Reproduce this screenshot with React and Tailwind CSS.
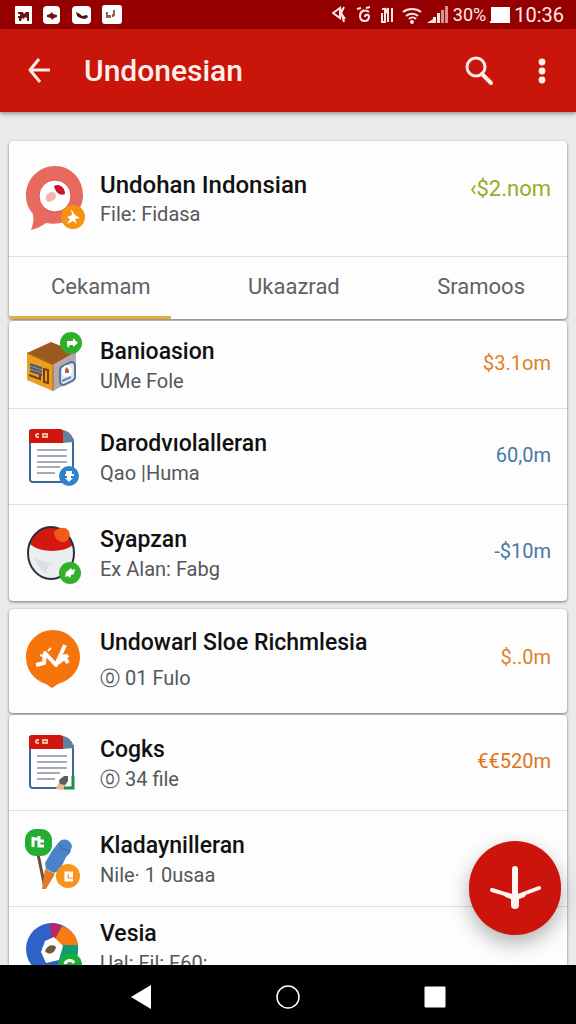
import { useState } from 'react'

function ChatIcon() {
  return (
    <svg viewBox="0 0 60 64" className="h-16 w-[60px] overflow-visible">
      <path d="M30 -1C14 -1 1 12 1 28c0 9 3 14 7 19 1 6 0 11-2 16 7-2 11-4 15-7 20 4 37-9 37-28C58 12 46-1 30-1z" fill="#e8695d" />
      <circle cx="30" cy="29" r="16" fill="#fff" stroke="#d9564c" />
      <path d="M29 19c5-3 11 1 11 8-4 2-9 0-11-8z" fill="#c9142a" />
      <path d="M21 29c2-4 7-5 9-3 3 4-1 9-7 9-2-1-3-4-2-6z" fill="#f3b6b3" />
      <circle cx="48" cy="50" r="12" fill="#f6920f" />
      <path d="M46 42l4 6 5 3-5 1 2 5-4-3-6 3 3-5-3-2 5-2z" fill="#fff" />
    </svg>
  )
}

function BoxIcon() {
  return (
    <svg viewBox="0 0 60 64" className="h-16 w-[60px] overflow-visible">
      <path d="M2 20L26 9l25 10-23 13z" fill="#9c5a1e" />
      <path d="M2 20l26 12v26L2 47z" fill="#e9a01c" />
      <path d="M28 32l23-13v27L28 58z" fill="#b3a8b0" />
      <path d="M2 20l26 12v26" fill="none" stroke="#a8681b" />
      <path d="M5 30l12 4v9L5 39z" fill="#565a6b" />
      <path d="M5 33l12 4M5 36l12 4" stroke="#8f95a3" />
      <path d="M19 36l4 1v13l-4-1zM4 42l11 4v-4" fill="none" stroke="#7a3c12" strokeWidth="2" />
      <path d="M36 34l10-5c3 0 4 2 4 4v11c0 2-1 3-3 4l-8 4c-3 0-4-1-4-4V37z" fill="#dfe6f0" stroke="#5b7397" strokeWidth="2" />
      <ellipse cx="42" cy="38" rx="5" ry="6" fill="#fff" />
      <path d="M40 40v-4l2-2 2 3v3z" fill="#b3684c" />
      <path d="M37 48l9-4" stroke="#5b86c4" strokeWidth="2" />
      <circle cx="46" cy="10" r="11" fill="#2fae2c" />
      <path d="M42 8h6V5l5 5-5 4v-2h-3l-2 3-1-3z" fill="#fff" />
    </svg>
  )
}

function DocumentIcon({ signed }) {
  return (
    <svg viewBox="0 0 60 64" className="h-16 w-[60px]">
      <path d="M5 6h32l11 9v39c0 2-1 3-3 3H8c-2 0-3-1-3-3z" fill="#fff" stroke="#3a6a9c" strokeWidth="2" />
      <path d="M37 5c6 0 11 5 12 12l-12 1z" fill="#64809f" />
      <path d="M7 4h28c2 0 3 1 3 3v11H4V7c0-2 1-3 3-3z" fill="#d0170f" />
      <path d="M11 9h3M11 12h3M11 9v3M18 9h4v3h-4z" fill="none" stroke="#ffb59c" strokeWidth="2" />
      <path d="M12 25h30M12 31h30M12 37h30M12 42h23M12 48h18" stroke="#a5abb4" strokeWidth="2" />
      {signed ? (
        <>
          <path d="M31 58c2-6 4-9 8-10l3 4-4 7z" fill="#e8bd92" />
          <path d="M34 49l5-4h4v5l-3 4-5-1z" fill="#5a5d60" />
          <path d="M39 57h9V45" fill="none" stroke="#1e8f4a" strokeWidth="3" />
        </>
      ) : (
        <>
          <circle cx="44" cy="51" r="10" fill="#2f82cb" />
          <path d="M41 46h6v3h2v2h-3v2h2l-4 4-4-4h2v-2h-2v-2h1z" fill="#fff" />
        </>
      )}
    </svg>
  )
}

function BallIcon() {
  return (
    <svg viewBox="0 0 60 64" className="h-16 w-[60px]">
      <ellipse cx="26" cy="32" rx="23" ry="26" fill="#eceff2" />
      <path d="M5 23C8 11 16 6 26 6s19 6 22 18c-9 8-34 8-43-1z" fill="#d3190f" />
      <path d="M10 36c2 10 7 15 13 17-2-5 0-10 7-11-8 0-15-2-20-6z" fill="#dbe0e5" />
      <ellipse cx="26" cy="32" rx="23" ry="26" fill="none" stroke="#2a2f3a" strokeWidth="2" />
      <path d="M29 11c3-4 10-6 14-2 3 4 2 9-3 12-6 1-11-4-11-10z" fill="#f25a1c" />
      <circle cx="45" cy="52" r="11" fill="#33b02d" />
      <path d="M41 51l3-2 2-2 1 2 3-1-1 5-3 1-1 3-2-2-3 1z" fill="#fff" />
    </svg>
  )
}

function PinIcon() {
  return (
    <svg viewBox="0 0 60 64" className="h-16 w-[60px]">
      <path d="M28 1C13 1 1 13 1 28c0 13 8 23 20 27l6 4 6-4c13-4 22-14 22-27C55 13 43 1 28 1z" fill="#f5740c" />
      <path d="M11 36l8-2 1-10 11 12 9-20M38 26l5 8M33 34l10-8" fill="none" stroke="#fff" strokeWidth="4" strokeLinejoin="round" />
      <path d="M15 26l6 2M23 22l3-3" stroke="#fff" strokeWidth="2" />
    </svg>
  )
}

function ToolsIcon() {
  return (
    <svg viewBox="0 0 60 64" className="h-16 w-[60px]">
      <path d="M13 27l7 34" stroke="#6d4a40" strokeWidth="3" />
      <path d="M34 15c4-5 12-2 13 4l-2 7-4 4-6 13-6 3-8-4-1-6 7-12z" fill="#4a83c8" />
      <path d="M34 17c2 4 6 6 11 7" fill="none" stroke="#2f62a5" />
      <path d="M20 42l10 5-9 15h-4z" fill="#e37b24" />
      <rect x="0" y="2" width="27" height="27" rx="11" fill="#23ad32" />
      <path d="M8 10v10M8 12h5M14 9v10h5M15 14h4" fill="none" stroke="#fff" strokeWidth="3" />
      <circle cx="43" cy="49" r="12" fill="#f7941d" />
      <path d="M48 46h-7v7h7M44 49h4" fill="none" stroke="#fff" strokeWidth="3" />
    </svg>
  )
}

function WheelIcon() {
  return (
    <svg viewBox="0 0 60 64" className="h-16 w-[60px]">
      <circle cx="27" cy="34" r="26" fill="#2e62c6" />
      <path d="M25 8c4 0 8 1 12 3L27 34z" fill="#b62a63" />
      <path d="M27 30l10-19c10 4 15 10 16 19z" fill="#fa7b12" />
      <path d="M27 30h26c0 10-1 15-6 21z" fill="#109a76" />
      <path d="M29 22l9 9-4 14-13 3-5-11 4-11z" fill="#fff" />
      <path d="M20 36c2-6 8-7 11-4-1 6-7 9-11 4z" fill="#6e5a3c" />
      <circle cx="45" cy="50" r="12" fill="#1cac38" />
      <path d="M40 49c1-4 7-5 9-1" fill="none" stroke="#fff" strokeWidth="3" />
    </svg>
  )
}

const groups = [
  {
    id: 'files',
    className: 'mt-0.5',
    items: [
      { title: 'Banioasion', sub: 'UMe Fole', price: '$3.1om', color: 'text-[#dd8127]', height: 'h-[88px]', icon: <BoxIcon /> },
      { title: 'Darodvıolalleran', sub: 'Qao |Huma', price: '60,0m', color: 'text-[#4679a4]', height: 'h-24', icon: <DocumentIcon /> },
      { title: 'Syapzan', sub: 'Ex Alan: Fabg', price: '-$10m', color: 'text-[#4679a4]', height: 'h-24', icon: <BallIcon /> }
    ]
  },
  {
    id: 'single',
    className: 'mt-2',
    items: [
      { title: 'Undowarl Sloe Richmlesia', sub: '⓪ 01 Fulo', price: '$..0m', color: 'text-[#dd8127]', height: 'h-[104px]', loose: true, icon: <PinIcon /> }
    ]
  },
  {
    id: 'more',
    className: 'mt-0.5',
    items: [
      { title: 'Cogks', sub: '⓪ 34 file', price: '€€520m', color: 'text-[#dd7518]', height: 'h-24', icon: <DocumentIcon signed /> },
      { title: 'Kladaynilleran', sub: 'Nile· 1 0usaa', height: 'h-24', icon: <ToolsIcon /> },
      { title: 'Vesia', sub: 'Ual: Fil: F60:', height: 'h-20', icon: <WheelIcon /> }
    ]
  }
]

const tabs = ['Cekamam', 'Ukaazrad', 'Sramoos']

function Row({ item }) {
  return (
    <li className={`flex items-center gap-[15px] px-4 ${item.height}`}>
      <span className="shrink-0">{item.icon}</span>
      <div className={`min-w-0 flex-1 ${item.loose ? 'pb-0.5' : 'pt-0.5'}`}>
        <h2 className="truncate text-[23px] leading-[30px] font-medium text-[#111]">{item.title}</h2>
        <p className={`truncate text-xl leading-7 text-[#55575a] ${item.loose ? 'mt-1.5' : ''}`}>{item.sub}</p>
      </div>
      {item.price && (
        <span className={`text-xl leading-7 ${item.loose ? 'pb-2' : 'pb-1'} ${item.color}`}>{item.price}</span>
      )}
    </li>
  )
}

function StatusBar() {
  return (
    <div className="flex h-[29px] shrink-0 items-center justify-between bg-[#940000] pr-3 pl-[15px] text-[#ffecec]">
      <svg viewBox="0 0 108 20" className="h-5 w-[108px]" fill="#fff">
        <rect x="0" y="1" width="17" height="18" rx="1" />
        <rect x="28" y="1" width="17" height="18" rx="4" />
        <rect x="57" y="1" width="19" height="18" rx="4" />
        <rect x="87" y="0" width="20" height="19" rx="3" />
        <path d="M3 7h5l1 2 2-2h3v9h-2v-3l-2-1-1 2-2-1-1 3H4v-3H3v-2h2V9H3zM32 10l3-1 2-2 1 2 4 1v2l-3 1-2 2-1-2-4-1z" fill="#6b1414" />
        <path d="M61 7l4 2 2 2 5-1 1 2-3 2-5-1-3-2z" fill="#4b1111" />
        <path d="M91 7h2v3h3v3h-5zM97 9h2v3h-2zM98 5h2v6h-2z" fill="#8b6651" />
      </svg>
      <div className="flex items-center gap-1">
        <svg viewBox="0 0 117 20" className="h-5 w-[117px]" fill="none" stroke="#ffe6e6" strokeWidth="2">
          <path d="M1 8l7-5v10zM8 3l4 14M12 2L9 8l4 6" />
          <path d="M25 4l4-1M34 3l4-1M37 7c-4-3-9-1-9 4 0 6 8 7 9 1 0-3-4-3-4 0M29 7l3-2" />
          <path d="M50 4h3v13h-4M50 8v8M56 3v14M60 3v14M53 3l3 6" />
          <path d="M71 7c5-4 13-4 18 0M74 11c4-3 9-3 12 0M77 14c2-2 5-2 7 0" />
          <circle cx="80" cy="17" r="1" fill="#fff" />
          <path d="M95 18l6-4v4zM101 18v-6h3v6zM105 18V8h3v10z" fill="#ffe6e6" stroke="none" />
          <path d="M109 18V5h3v13zM113 18V1h3v17z" fill="#d89292" stroke="none" />
        </svg>
        <span className="text-lg leading-5">30%</span>
        <svg viewBox="0 0 20 16" className="h-4 w-5" fill="#fff">
          <path d="M1 0h19v16H0v-2h1z" />
        </svg>
        <span className="text-xl leading-5">10:36</span>
      </div>
    </div>
  )
}

export default function App() {
  const [activeTab, setActiveTab] = useState(0)

  return (
    <div className="flex h-screen flex-col overflow-hidden bg-[#e9eaec] font-['Roboto',sans-serif]">
      <StatusBar />

      {/* App bar */}
      <header className="z-10 flex h-[83px] shrink-0 items-center bg-[#c9150a] pr-6 pl-[27px] text-white shadow-[0_2px_4px_rgba(0,0,0,0.35)]">
        <button type="button" aria-label="Back" className="mr-8">
          <svg viewBox="0 0 25 26" className="h-[26px] w-[25px]" fill="none" stroke="#ffeae6" strokeWidth="3" strokeLinejoin="round">
            <path d="M12 1L3 12l10 12M3 12h20" />
          </svg>
        </button>
        <h1 className="flex-1 text-3xl leading-9 font-medium text-[#ffeeea]">Undonesian</h1>
        <button type="button" aria-label="Search" className="mr-[38px]">
          <svg viewBox="0 0 29 30" className="h-[30px] w-[29px]" fill="none" stroke="#ffeae6">
            <circle cx="11" cy="11" r="9" strokeWidth="3" />
            <path d="M17 18l9 9" strokeWidth="4" strokeLinecap="round" />
          </svg>
        </button>
        <button type="button" aria-label="More options">
          <svg viewBox="0 0 20 26" className="h-[26px] w-5" fill="#fff0ec">
            <circle cx="10" cy="4" r="3.4" />
            <circle cx="10" cy="13" r="3.4" />
            <circle cx="10" cy="22" r="3.4" />
          </svg>
        </button>
      </header>

      <div className="relative min-h-0 flex-1">
        <main className="h-full overflow-y-auto px-[9px] pt-[29px] [scrollbar-width:none]">
          <section className="overflow-hidden rounded bg-[#fdfdfd] shadow-[0_1px_3px_rgba(0,0,0,0.5)]">
            <div className="flex h-[115px] items-center gap-[15px] px-4">
              <span className="shrink-0"><ChatIcon /></span>
              <div className="min-w-0 flex-1">
                <h2 className="truncate text-2xl leading-[30px] font-medium text-[#111]">Undohan Indonsian</h2>
                <p className="truncate text-xl leading-7 text-[#55575a]">File: Fidasa</p>
              </div>
              <span className="pb-5 text-[22px] leading-7 text-[#94ad25]">‹$2.nom</span>
            </div>
            <div role="tablist" className="flex h-[60px] items-center justify-between border-t border-[#dfe0e2] px-[42px]">
              {tabs.map((tab, i) => (
                <button
                  key={tab}
                  type="button"
                  role="tab"
                  aria-selected={activeTab === i}
                  onClick={() => setActiveTab(i)}
                  className="text-[22px] leading-7 text-[#606266]"
                >
                  {tab}
                </button>
              ))}
            </div>
            <div className="h-[3px]">
              <div className="h-full w-[29%] bg-[#e6ac3c]" />
            </div>
          </section>

          {groups.map(group => (
            <ul
              key={group.id}
              className={`divide-y divide-[#dfe0e2] rounded bg-[#fdfdfd] shadow-[0_1px_3px_rgba(0,0,0,0.5)] ${group.className}`}
            >
              {group.items.map(item => <Row key={item.title} item={item} />)}
            </ul>
          ))}
        </main>

        <button
          type="button"
          aria-label="Add"
          className="absolute right-[15px] bottom-[30px] flex h-[94px] w-[92px] items-center justify-center rounded-full bg-[#cb140c] shadow-[0_8px_20px_rgba(0,0,0,0.3)]"
        >
          <svg viewBox="0 0 52 46" className="h-[46px] w-[52px]" fill="none" stroke="#fff4f2" strokeLinecap="round" strokeLinejoin="round">
            <path d="M26 4v28" strokeWidth="6" />
            <path d="M26 32v8" strokeWidth="8" />
            <path d="M3 25l23 7 24-9" strokeWidth="4" />
            <path d="M18 30l8 3 8-3" strokeWidth="5" />
          </svg>
        </button>
      </div>

      {/* System navigation */}
      <nav className="z-10 flex h-[59px] shrink-0 items-center justify-center gap-[123px] bg-black pt-2 pb-1">
        <button type="button" aria-label="Back">
          <svg viewBox="0 0 24 24" className="size-6" fill="#fff"><path d="M2 12L22 0v24z" /></svg>
        </button>
        <button type="button" aria-label="Home">
          <svg viewBox="0 0 24 24" className="size-6" fill="none" stroke="#fff" strokeWidth="1.5"><circle cx="12" cy="12" r="11" /></svg>
        </button>
        <button type="button" aria-label="Recent apps">
          <svg viewBox="0 0 24 24" className="size-6" fill="#fff"><rect x="1.5" y="1.5" width="21" height="21" rx="1" /></svg>
        </button>
      </nav>
    </div>
  )
}
